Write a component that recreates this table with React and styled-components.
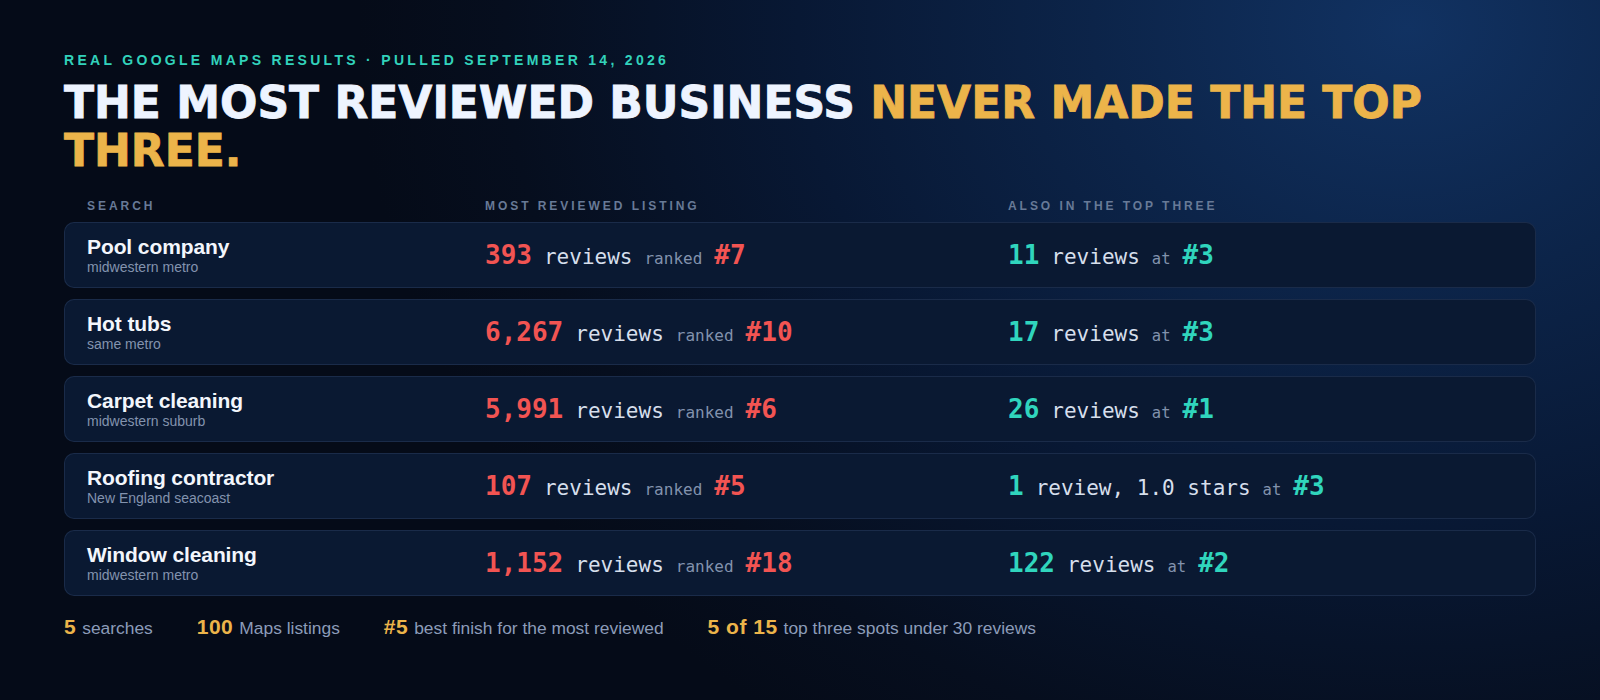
import React from "react";
import styled, { createGlobalStyle } from "styled-components";

const GlobalStyle = createGlobalStyle`
  html, body {
    margin: 0;
    padding: 0;
    background: #050b18;
  }
  body {
    font-family: "Liberation Sans", Arial, sans-serif;
  }
`;

const Page = styled.div`
  width: 1600px;
  height: 700px;
  box-sizing: border-box;
  padding: 52px 64px 0 64px;
  overflow: hidden;
  background: radial-gradient(
    ellipse 1050px 860px at 88% 4%,
    #113262 0%,
    #0c2449 30%,
    #081834 58%,
    #060e1e 86%,
    #050b18 100%
  );
`;

const Eyebrow = styled.div`
  font-size: 14px;
  line-height: 17px;
  font-weight: 700;
  letter-spacing: 3.3px;
  color: #32d2bb;
  text-transform: uppercase;
`;

const Headline = styled.h1`
  margin: 10px 0 0 0;
  font-family: "DejaVu Sans", sans-serif;
  font-weight: 700;
  font-size: 44px;
  line-height: 48px;
  color: #eef4ff;
  text-transform: uppercase;
  -webkit-text-stroke: 0.8px currentColor;
`;

const Accent = styled.span`
  color: #ecb44a;
`;

const Columns = styled.div`
  display: grid;
  grid-template-columns: 398px 523px 1fr;
  align-items: center;
`;

const HeaderRow = styled(Columns)`
  margin-top: 24px;
  padding: 0 23px;
`;

const ColLabel = styled.div`
  font-size: 12px;
  line-height: 15px;
  font-weight: 700;
  letter-spacing: 2.95px;
  color: #687a97;
  text-transform: uppercase;
`;

const Rows = styled.div`
  display: flex;
  flex-direction: column;
  gap: 11px;
  margin-top: 8px;
`;

const Row = styled(Columns)`
  height: 66px;
  box-sizing: border-box;
  padding: 0 22px;
  background: #0a1932;
  border: 1px solid rgba(110, 145, 200, 0.16);
  border-radius: 10px;
`;

const SearchCell = styled.div`
  display: flex;
  flex-direction: column;
`;

const SearchName = styled.div`
  font-size: 21px;
  line-height: 24px;
  font-weight: 700;
  color: #f3f6fc;
  letter-spacing: -0.1px;
`;

const SearchPlace = styled.div`
  font-size: 14px;
  line-height: 17px;
  color: #8393ae;
`;

const Stat = styled.div`
  display: flex;
  align-items: baseline;
  gap: 12px;
  font-family: "DejaVu Sans Mono", "Liberation Mono", monospace;
  white-space: nowrap;
`;

const Num = styled.span`
  font-size: 26px;
  font-weight: 700;
  color: ${(p) => (p.$tone === "red" ? "#f25452" : "#30d5bd")};
`;

const Words = styled.span`
  font-size: 21px;
  color: #d6dfec;
`;

const Small = styled.span`
  font-size: ${(p) => (p.$size ? p.$size : "16px")};
  color: #8292ad;
`;

const Footer = styled.div`
  display: flex;
  align-items: baseline;
  gap: 44px;
  margin-top: 19px;
`;

const FooterItem = styled.div`
  display: flex;
  align-items: baseline;
  gap: 6px;
`;

const FooterNum = styled.span`
  font-size: 21px;
  line-height: 24px;
  font-weight: 700;
  letter-spacing: 0.5px;
  color: #ecb44a;
`;

const FooterLabel = styled.span`
  font-size: 17.4px;
  color: #8c9cb9;
`;

const rows = [
  {
    name: "Pool company",
    place: "midwestern metro",
    most: "393",
    mostRank: "#7",
    top: "11",
    topWords: "reviews",
    topRank: "#3",
  },
  {
    name: "Hot tubs",
    place: "same metro",
    most: "6,267",
    mostRank: "#10",
    top: "17",
    topWords: "reviews",
    topRank: "#3",
  },
  {
    name: "Carpet cleaning",
    place: "midwestern suburb",
    most: "5,991",
    mostRank: "#6",
    top: "26",
    topWords: "reviews",
    topRank: "#1",
  },
  {
    name: "Roofing contractor",
    place: "New England seacoast",
    most: "107",
    mostRank: "#5",
    top: "1",
    topWords: "review, 1.0 stars",
    topRank: "#3",
  },
  {
    name: "Window cleaning",
    place: "midwestern metro",
    most: "1,152",
    mostRank: "#18",
    top: "122",
    topWords: "reviews",
    topRank: "#2",
  },
];

const stats = [
  { num: "5", label: "searches" },
  { num: "100", label: "Maps listings" },
  { num: "#5", label: "best finish for the most reviewed" },
  { num: "5 of 15", label: "top three spots under 30 reviews" },
];

function ResultRow({ row }) {
  return (
    <Row>
      <SearchCell>
        <SearchName>{row.name}</SearchName>
        <SearchPlace>{row.place}</SearchPlace>
      </SearchCell>
      <Stat>
        <Num $tone="red">{row.most}</Num>
        <Words>reviews</Words>
        <Small>ranked</Small>
        <Num $tone="red">{row.mostRank}</Num>
      </Stat>
      <Stat>
        <Num $tone="teal">{row.top}</Num>
        <Words>{row.topWords}</Words>
        <Small $size="15.5px">at</Small>
        <Num $tone="teal">{row.topRank}</Num>
      </Stat>
    </Row>
  );
}

export default function App() {
  return (
    <>
      <GlobalStyle />
      <Page>
        <Eyebrow>Real Google Maps results · Pulled September 14, 2026</Eyebrow>
        <Headline>
          The most reviewed business <Accent>never made the top three.</Accent>
        </Headline>
        <HeaderRow>
          <ColLabel>Search</ColLabel>
          <ColLabel>Most reviewed listing</ColLabel>
          <ColLabel>Also in the top three</ColLabel>
        </HeaderRow>
        <Rows>
          {rows.map((row) => (
            <ResultRow key={row.name} row={row} />
          ))}
        </Rows>
        <Footer>
          {stats.map((s) => (
            <FooterItem key={s.label}>
              <FooterNum>{s.num}</FooterNum>
              <FooterLabel>{s.label}</FooterLabel>
            </FooterItem>
          ))}
        </Footer>
      </Page>
    </>
  );
}
